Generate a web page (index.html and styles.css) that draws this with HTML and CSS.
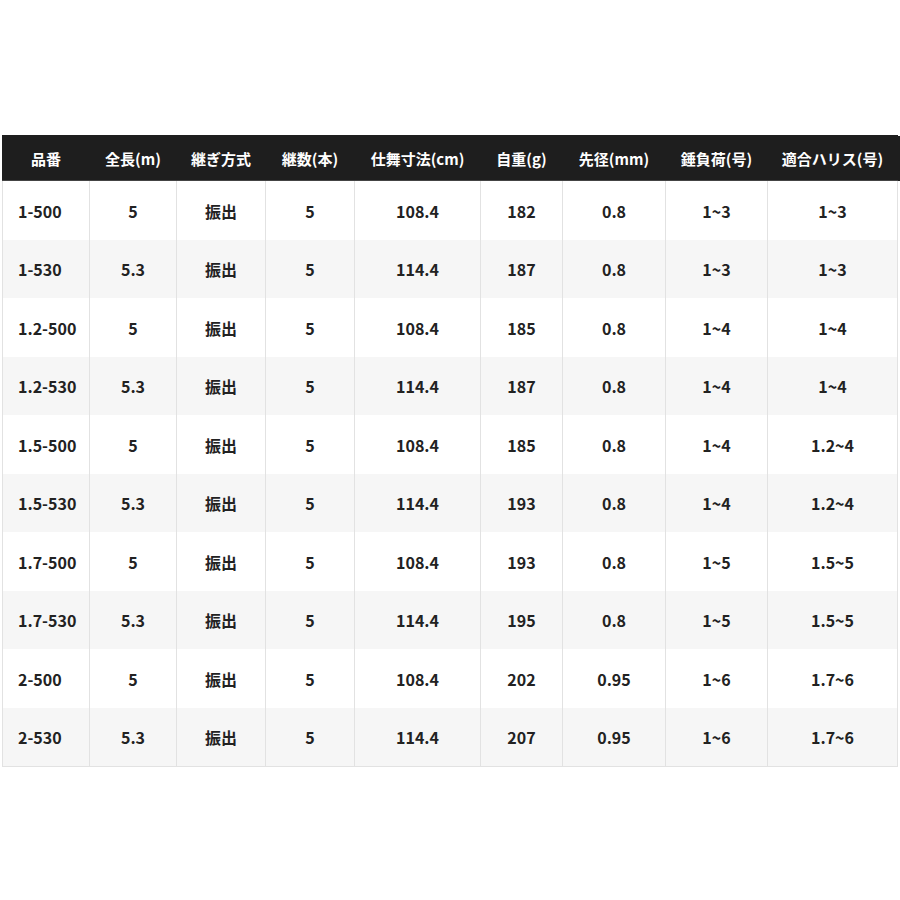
FILE: index.html
```html
<!DOCTYPE html>
<html lang="ja">
<head>
<meta charset="utf-8">
<title>スペック表</title>
<link rel="stylesheet" href="styles.css">
</head>
<body>
<div class="page">
<table class="spec">
<colgroup>
<col class="c1"><col class="c2"><col class="c3"><col class="c4"><col class="c5"><col class="c6"><col class="c7"><col class="c8"><col class="c9">
</colgroup>
<thead>
<tr><th>品番</th><th>全長(m)</th><th>継ぎ方式</th><th>継数(本)</th><th>仕舞寸法(cm)</th><th>自重(g)</th><th>先径(mm)</th><th>錘負荷(号)</th><th>適合ハリス(号)</th></tr>
</thead>
<tbody>
<tr><td>1-500</td><td>5</td><td>振出</td><td>5</td><td>108.4</td><td>182</td><td>0.8</td><td>1~3</td><td>1~3</td></tr>
<tr><td>1-530</td><td>5.3</td><td>振出</td><td>5</td><td>114.4</td><td>187</td><td>0.8</td><td>1~3</td><td>1~3</td></tr>
<tr><td>1.2-500</td><td>5</td><td>振出</td><td>5</td><td>108.4</td><td>185</td><td>0.8</td><td>1~4</td><td>1~4</td></tr>
<tr><td>1.2-530</td><td>5.3</td><td>振出</td><td>5</td><td>114.4</td><td>187</td><td>0.8</td><td>1~4</td><td>1~4</td></tr>
<tr><td>1.5-500</td><td>5</td><td>振出</td><td>5</td><td>108.4</td><td>185</td><td>0.8</td><td>1~4</td><td>1.2~4</td></tr>
<tr><td>1.5-530</td><td>5.3</td><td>振出</td><td>5</td><td>114.4</td><td>193</td><td>0.8</td><td>1~4</td><td>1.2~4</td></tr>
<tr><td>1.7-500</td><td>5</td><td>振出</td><td>5</td><td>108.4</td><td>193</td><td>0.8</td><td>1~5</td><td>1.5~5</td></tr>
<tr><td>1.7-530</td><td>5.3</td><td>振出</td><td>5</td><td>114.4</td><td>195</td><td>0.8</td><td>1~5</td><td>1.5~5</td></tr>
<tr><td>2-500</td><td>5</td><td>振出</td><td>5</td><td>108.4</td><td>202</td><td>0.95</td><td>1~6</td><td>1.7~6</td></tr>
<tr><td>2-530</td><td>5.3</td><td>振出</td><td>5</td><td>114.4</td><td>207</td><td>0.95</td><td>1~6</td><td>1.7~6</td></tr>
</tbody>
</table>
</div>
</body>
</html>
```
FILE: styles.css
```css
html, body {
  margin: 0;
  padding: 0;
  background: #ffffff;
}
.page {
  padding: 135px 0 0 2px;
}
.spec {
  border-collapse: collapse;
  table-layout: fixed;
  width: 895px;
  font-family: "Noto Sans CJK JP", "Noto Sans", sans-serif;
  font-weight: 700;
  color: #222222;
}
.c1 { width: 87px; }
.c2 { width: 87px; }
.c3 { width: 89px; }
.c4 { width: 89px; }
.c5 { width: 126px; }
.c6 { width: 82px; }
.c7 { width: 103px; }
.c8 { width: 102px; }
.c9 { width: 130px; }
.spec th {
  background: #1e1e1e;
  color: #ffffff;
  font-size: 15px;
  height: 44px;
  padding: 0;
  text-align: center;
  vertical-align: middle;
  border: 1px solid #1e1e1e;
  border-bottom: 1px solid #444444;
}
.spec th:last-child {
  box-shadow: 3px 0 0 #1e1e1e;
}
.spec td {
  font-size: 16px;
  height: 57.5px;
  padding: 1px 0 0 0;
  text-align: center;
  vertical-align: middle;
  border-left: 1px solid #e2e2e2;
  border-right: 1px solid #e2e2e2;
}
.spec td:first-child {
  text-align: left;
  padding-left: 15px;
}
.spec tbody tr:nth-child(even) td {
  background: #f6f6f6;
}
.spec tbody tr:last-child td {
  border-bottom: 1px solid #e2e2e2;
}
```
